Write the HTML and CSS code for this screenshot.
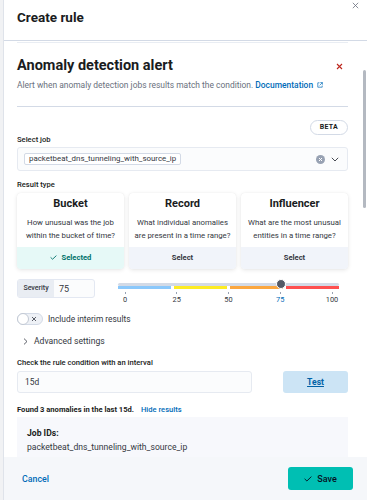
FILE: index.html
```html
<!DOCTYPE html>
<html lang="en">
<head>
  <meta charset="UTF-8" />
  <meta name="viewport" content="width=device-width, initial-scale=1.0"/>
  <title>Create rule</title>
  <link rel="stylesheet" href="styles.css">
</head>
<body>
  <div class="flyout">
    <header class="flyout-header">
      <h2>Create rule</h2>
    </header>

    <div class="flyout-body">
      <div class="body-top"></div>

      <div class="rule-title">
        <h3>Anomaly detection alert</h3>
        <svg class="remove-icon" width="7" height="7" viewBox="0 0 7 7"><path d="M1 1L6 6M6 1L1 6" stroke="#bd271e" stroke-width="1.1"/></svg>
      </div>
      <p class="rule-desc">
        Alert when anomaly detection jobs results match the condition.
        <a class="link doc-link" href="#">Documentation
          <svg width="6" height="6" viewBox="0 0 6 6"><path d="M2.5 0.8H0.8V5.2H5.2V3.5M3.3 0.6H5.4V2.7M5.4 0.6L2.6 3.4" fill="none" stroke="#006bb8" stroke-width="0.7"/></svg>
        </a>
      </p>
      <hr class="divider">

      <div class="beta-row"><span class="beta">BETA</span></div>

      <label class="field-label">Select job</label>
      <div class="combo">
        <span class="pill">packetbeat_dns_tunneling_with_source_ip</span>
        <span class="combo-icons">
          <svg width="9" height="9" viewBox="0 0 9 9"><circle cx="4.5" cy="4.5" r="4.5" fill="#98a2b3"/><path d="M3 3L6 6M6 3L3 6" stroke="#fff" stroke-width="1"/></svg>
          <svg width="8" height="5" viewBox="0 0 8 5"><path d="M0.8 0.8L4 4L7.2 0.8" fill="none" stroke="#343741" stroke-width="0.9"/></svg>
        </span>
      </div>

      <label class="field-label result-label">Result type</label>
      <div class="cards">
        <div class="card">
          <div class="card-title">Bucket</div>
          <div class="card-desc">How unusual was the job within the bucket of time?</div>
          <div class="card-foot selected">
            <svg width="7" height="5" viewBox="0 0 7 5"><path d="M0.6 2.4L2.6 4.2L6.4 0.6" fill="none" stroke="#00726b" stroke-width="0.9"/></svg>
            Selected
          </div>
        </div>
        <div class="card">
          <div class="card-title">Record</div>
          <div class="card-desc">What individual anomalies are present in a time range?</div>
          <div class="card-foot">Select</div>
        </div>
        <div class="card">
          <div class="card-title">Influencer</div>
          <div class="card-desc">What are the most unusual entities in a time range?</div>
          <div class="card-foot">Select</div>
        </div>
      </div>

      <div class="severity-row">
        <div class="severity-field">
          <span class="prepend">Severity</span>
          <span class="sev-value">75</span>
        </div>
        <div class="slider">
          <div class="track"></div>
          <div class="levels">
            <span class="lvl low"></span>
            <span class="lvl minor"></span>
            <span class="lvl major"></span>
            <span class="lvl critical"></span>
          </div>
          <span class="thumb"></span>
          <div class="ticks">
            <span>0</span>
            <span>25</span>
            <span>50</span>
            <span class="active">75</span>
            <span>100</span>
          </div>
        </div>
      </div>

      <div class="switch-row">
        <span class="switch">
          <span class="knob"></span>
          <svg width="6" height="6" viewBox="0 0 6 6"><path d="M1 1L5 5M5 1L1 5" stroke="#343741" stroke-width="0.8"/></svg>
        </span>
        <span>Include interim results</span>
      </div>

      <div class="advanced">
        <svg width="5" height="7" viewBox="0 0 5 7"><path d="M1 0.6L4 3.5L1 6.4" fill="none" stroke="#343741" stroke-width="0.8"/></svg>
        <span>Advanced settings</span>
      </div>

      <label class="field-label interval-label">Check the rule condition with an interval</label>
      <div class="interval-row">
        <div class="text-input">15d</div>
        <button class="test-btn">Test</button>
      </div>

      <div class="found">
        <b>Found 3 anomalies in the last 15d.</b>
        <a class="link" href="#">Hide results</a>
      </div>
      <div class="results">
        <div class="results-title">Job IDs:</div>
        <div class="results-text">packetbeat_dns_tunneling_with_source_ip</div>
      </div>
    </div>

    <footer class="flyout-footer">
      <a class="link cancel" href="#">Cancel</a>
      <button class="save-btn">
        <svg width="8" height="6" viewBox="0 0 8 6"><path d="M0.6 2.8L2.9 5L7.4 0.6" fill="none" stroke="#07101f" stroke-width="0.9"/></svg>
        Save
      </button>
    </footer>

    <svg class="close-icon" width="7" height="7" viewBox="0 0 7 7"><path d="M0.8 0.8L6.2 6.2M6.2 0.8L0.8 6.2" stroke="#69707d" stroke-width="0.8"/></svg>
    <div class="scrollbar"><span class="scroll-thumb"></span></div>
  </div>
</body>
</html>
```

FILE: styles.css
```css
* {
  box-sizing: border-box;
}

body {
  margin: 0;
  font-family: Roboto, 'Liberation Sans', sans-serif;
  font-size: 8.5px;
  color: #343741;
  background-color: #f1f2f4;
}

.flyout {
  position: relative;
  margin-left: 3px;
  height: 500px;
  background-color: #fff;
  border-left: 1px solid #dfe3ea;
  display: flex;
  flex-direction: column;
  overflow: hidden;
}

.flyout-header {
  height: 41px;
  padding: 8px 13px 0;
  border-bottom: 1px solid #d3dae6;
}

.flyout-header h2 {
  margin: 0;
  font-size: 13.5px;
  line-height: 18px;
  font-weight: 700;
  color: #1a1c21;
}

.close-icon {
  position: absolute;
  top: 2px;
  right: 8px;
}

.flyout-body {
  flex: 1;
  overflow: hidden;
  padding: 0 19px 0 13px;
}

.body-top {
  margin-top: 1px;
  border-top: 1px solid #e9edf3;
}

.rule-title {
  display: flex;
  justify-content: space-between;
  align-items: center;
  margin-top: 13px;
}

.rule-title h3 {
  margin: 0;
  font-size: 14.5px;
  line-height: 20px;
  font-weight: 700;
  color: #1a1c21;
}

.remove-icon {
  margin-right: 5px;
}

.rule-desc {
  margin: 3px 0 0;
  line-height: 12px;
  font-size: 8.45px;
  color: #69707d;
}

.link {
  color: #006bb8;
  text-decoration: none;
  font-weight: 500;
}

.doc-link svg {
  margin-left: 2px;
}

.divider {
  margin: 15px 0 0;
  border: none;
  border-top: 1px solid #d3dae6;
}

.beta-row {
  display: flex;
  justify-content: flex-end;
  margin-top: 13px;
}

.beta {
  height: 15px;
  padding: 0 9px;
  border: 1px solid #d3dae6;
  border-radius: 8px;
  font-size: 7px;
  line-height: 13px;
  font-weight: 700;
  letter-spacing: 0.3px;
  color: #1a1c21;
}

.field-label {
  display: block;
  font-size: 7.6px;
  line-height: 10px;
  font-weight: 500;
  color: #1a1c21;
}

.combo {
  margin-top: 2px;
  height: 24px;
  background-color: #fbfcfd;
  border: 1px solid #e6eaf1;
  border-radius: 3px;
  display: flex;
  align-items: center;
  justify-content: space-between;
  padding: 0 8px 0 6px;
}

.pill {
  height: 12px;
  padding: 0 4px;
  background-color: #fff;
  border: 1px solid #d3dae6;
  border-radius: 2px;
  font-size: 7.9px;
  line-height: 10px;
  color: #343741;
}

.combo-icons {
  display: flex;
  align-items: center;
  gap: 6px;
}

.result-label {
  margin-top: 9px;
}

.cards {
  margin-top: 3px;
  display: flex;
  gap: 5px;
}

.card {
  flex: 1;
  height: 76px;
  background-color: #fff;
  border-radius: 4px;
  box-shadow: 0 1px 4px rgba(0, 0, 0, 0.1), 0 0 1px rgba(0, 0, 0, 0.08);
  display: flex;
  flex-direction: column;
  text-align: center;
  overflow: hidden;
}

.card-title {
  padding-top: 4px;
  font-size: 11px;
  line-height: 14px;
  font-weight: 700;
  color: #1a1c21;
}

.card-desc {
  margin-top: 5px;
  padding: 0 4px;
  height: 31px;
  font-size: 7.8px;
  line-height: 13px;
  color: #343741;
}

.card-foot {
  height: 22px;
  background-color: #f1f4fa;
  font-size: 7.6px;
  line-height: 22px;
  font-weight: 700;
  color: #343741;
}

.card-foot.selected {
  background-color: #e6f9f7;
  color: #00726b;
}

.card-foot svg {
  margin-right: 3px;
}

.severity-row {
  margin-top: 10px;
  height: 24px;
  display: flex;
  align-items: flex-start;
}

.severity-field {
  width: 78px;
  height: 19px;
  border: 1px solid #e3e8f2;
  border-radius: 3px;
  background-color: #fbfcfd;
  display: flex;
  align-items: center;
  overflow: hidden;
}

.prepend {
  width: 36px;
  height: 100%;
  background-color: #e9edf3;
  font-size: 7px;
  font-weight: 500;
  line-height: 17px;
  text-align: center;
  color: #343741;
}

.sev-value {
  padding-left: 5px;
  font-size: 9px;
  color: #343741;
}

.slider {
  position: relative;
  margin-left: 23px;
  width: 221px;
  height: 24px;
}

.track {
  margin-top: 4px;
  height: 3px;
  border-radius: 2px;
  background-color: #d3dae6;
}

.levels {
  display: flex;
  gap: 3px;
  height: 3px;
}

.lvl {
  flex: 1;
}

.lvl.low { background-color: #8bc8fb; }
.lvl.minor { background-color: #fdec25; }
.lvl.major { background-color: #fba740; }
.lvl.critical { background-color: #fe5050; }

.thumb {
  position: absolute;
  top: 0;
  left: 158px;
  width: 10px;
  height: 10px;
  border-radius: 50%;
  background-color: #535966;
  border: 1.5px solid #fff;
}

.ticks {
  margin-top: 3px;
  display: flex;
  justify-content: space-between;
}

.ticks span {
  width: 14px;
  padding-top: 3px;
  position: relative;
  text-align: center;
  font-size: 7.4px;
  line-height: 10px;
  color: #343741;
}

.ticks span::before {
  content: '';
  position: absolute;
  top: 0;
  left: 6.5px;
  width: 1px;
  height: 2px;
  background-color: #98a2b3;
}

.ticks span.active {
  color: #006bb8;
}

.switch-row {
  margin-top: 9px;
  height: 13px;
  display: flex;
  align-items: center;
  gap: 5px;
  font-size: 8.4px;
  color: #343741;
}

.switch {
  position: relative;
  width: 26px;
  height: 12px;
  border-radius: 6px;
  background-color: #eef1f6;
  border: 1px solid #d3dae6;
  display: flex;
  align-items: center;
  justify-content: flex-end;
  padding-right: 5px;
}

.knob {
  position: absolute;
  left: -1px;
  top: -1px;
  width: 12px;
  height: 12px;
  border-radius: 50%;
  background-color: #fff;
  border: 1px solid #c2c9d4;
}

.advanced {
  margin-top: 10px;
  height: 12px;
  display: flex;
  align-items: center;
  gap: 6px;
  padding-left: 6px;
  font-size: 8.6px;
  color: #343741;
}

.interval-label {
  margin-top: 11px;
}

.interval-row {
  margin-top: 3px;
  display: flex;
  gap: 31px;
}

.text-input {
  flex: 1;
  height: 22px;
  padding-left: 7px;
  background-color: #fbfcfd;
  border: 1px solid #e6eaf1;
  border-radius: 3px;
  font-size: 8.4px;
  line-height: 20px;
  color: #343741;
}

.test-btn {
  width: 65px;
  height: 22px;
  border: none;
  border-radius: 3px;
  background-color: #cce4f5;
  font-family: inherit;
  font-size: 8.6px;
  font-weight: 700;
  color: #0061a6;
  text-decoration: underline;
}

.found {
  margin-top: 12px;
  font-size: 7.6px;
  line-height: 10px;
  color: #1a1c21;
}

.found b {
  font-weight: 700;
  margin-right: 5px;
}

.results {
  margin-top: 2px;
  height: 60px;
  padding: 10px 10px 0;
  background-color: #f7f8fc;
}

.results-title {
  font-size: 8.6px;
  line-height: 12px;
  font-weight: 700;
  color: #1a1c21;
}

.results-text {
  margin-top: 2px;
  font-size: 8.6px;
  line-height: 12px;
  color: #343741;
}

.flyout-footer {
  height: 43px;
  background-color: #f5f7fa;
  display: flex;
  align-items: center;
  justify-content: space-between;
  padding: 0 14px 0 18px;
}

.cancel {
  font-size: 8.8px;
}

.save-btn {
  width: 65px;
  height: 23px;
  border: none;
  border-radius: 3px;
  background-color: #00bfb3;
  font-family: inherit;
  font-size: 9px;
  font-weight: 500;
  color: #07101f;
  display: flex;
  align-items: center;
  justify-content: center;
  gap: 5px;
}

.scrollbar {
  position: absolute;
  top: 42px;
  right: 1px;
  width: 3px;
  height: 414px;
}

.scroll-thumb {
  display: block;
  margin-top: 28px;
  height: 138px;
  border-radius: 2px;
  background-color: #b4b9c1;
}
```
